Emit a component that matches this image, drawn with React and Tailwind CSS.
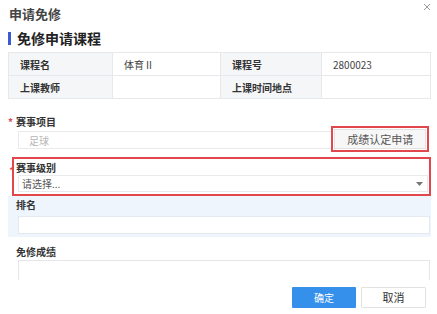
import React from 'react';

const Cell = ({ head, children, className = '' }) => (
  <div
    className={`flex items-center px-[11px] text-[10px] border-[#e6e8ec] ${
      head ? 'bg-[#f5f6f8] font-bold text-[#333]' : 'text-[#444]'
    } ${className}`}
  >
    {children}
  </div>
);

const Label = ({ required, children }) => (
  <div className="flex items-center h-[14px] text-[10px] font-bold text-[#333]">
    <span className={`w-[8px] text-[#e04a4a] ${required ? '' : 'invisible'}`}>*</span>
    {children}
  </div>
);

export default function App() {
  return (
    <div className="w-[437px] h-[314px] overflow-hidden bg-white px-2 font-['Noto_Sans_CJK_SC',sans-serif] text-[#333]">
      <div className="flex items-center justify-between h-[27px] pl-[1px]">
        <span className="text-[13px] text-[#444] font-semibold">申请免修</span>
        <svg width="8" height="8" viewBox="0 0 8 8" className="mr-[-2px] mt-[-14px]">
          <path d="M1 1L7 7M7 1L1 7" stroke="#999" strokeWidth="1" />
        </svg>
      </div>

      <div className="flex items-center h-[22px] mb-[3px]">
        <span className="w-[3px] h-[13px] bg-[#3d5bd0]" />
        <span className="ml-[6px] text-[14px] font-bold text-[#222]">免修申请课程</span>
      </div>

      <div className="w-[423px] border border-[#e6e8ec] grid grid-cols-[104px_108px_101px_1fr]">
        <Cell head className="h-[23px] border-r border-b">课程名</Cell>
        <Cell className="h-[23px] border-r border-b">体育Ⅱ</Cell>
        <Cell head className="h-[23px] border-r border-b">课程号</Cell>
        <Cell className="h-[23px] border-b">2800023</Cell>
        <Cell head className="h-[22px] border-r">上课教师</Cell>
        <Cell className="h-[22px] border-r" />
        <Cell head className="h-[22px] border-r">上课时间地点</Cell>
        <Cell className="h-[22px]" />
      </div>

      <div className="mt-[15px]">
        <Label required>赛事项目</Label>
        <div className="flex items-center mt-[-2px]">
          <div className="ml-[10px] w-[316px] h-[18px] mt-[2px] border border-[#e8eaee] flex items-center px-[10px] text-[10px] text-[#b5b5b5]">
            足球
          </div>
          <div className="ml-[-1px] w-[98px] h-[26px] border-2 border-[#e2474b] p-[1px]">
            <div className="h-full bg-[#f7f7f7] border border-[#e2e2e2] flex items-center justify-center text-[11px] text-[#555]">
              成绩认定申请
            </div>
          </div>
        </div>
      </div>

      <div className="relative mt-[5px] ml-[4px] w-[419px] h-[39px] border-2 border-[#e2474b] pt-[1px] pb-[2px]">
        <span className="absolute left-[-5px] top-[4px] text-[10px] text-[#e04a4a]">*</span>
        <div className="pl-[2px] h-[14px] flex items-center text-[10px] font-bold text-[#333]">赛事级别</div>
        <div className="ml-[4px] mr-[1px] h-[17px] mt-[1px] border border-[#e8eaee] flex items-center justify-between px-[3px] text-[10px] text-[#555]">
          <span>请选择...</span>
          <svg width="7" height="4" viewBox="0 0 7 4" className="mr-[1px]">
            <path d="M0 0H7L3.5 4Z" fill="#777" />
          </svg>
        </div>
      </div>

      <div className="w-[423px] h-[41px] bg-[#eef5fd] pt-[1px]">
        <Label>排名</Label>
        <div className="ml-[10px] mr-[1px] mt-[5px] h-[18px] bg-white border border-[#e4e9f0]" />
      </div>

      <div className="mt-[7px]">
        <Label>免修成绩</Label>
        <div className="ml-[10px] w-[412px] mt-[2px] h-[20px] border border-b-0 border-[#e4e6ea]" />
      </div>

      <div className="flex justify-end gap-[5px] mt-[7px] pr-[3px]">
        <button className="w-[64px] h-[21px] bg-[#3590ec] text-white text-[10px] rounded-[1px]">确定</button>
        <button className="w-[65px] h-[21px] bg-white border border-[#e2e2e2] text-[11px] text-[#333] rounded-[1px]">
          取消
        </button>
      </div>
    </div>
  );
}
